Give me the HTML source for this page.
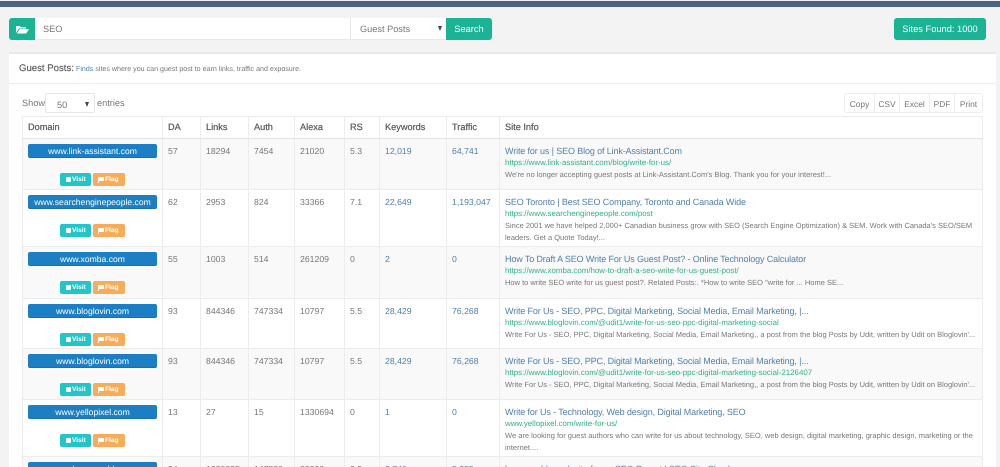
<!DOCTYPE html>
<html lang="en"><head><meta charset="utf-8"><title>Guest Posts</title>
<style>
*{box-sizing:border-box}
html,body{margin:0;padding:0;width:1000px;height:467px;overflow:hidden;background:#f3f3f4;font-family:"Liberation Sans",sans-serif;color:#676a6c;text-rendering:geometricPrecision}
#wrap{position:relative;width:1000px;height:467px;overflow:hidden;background:#f3f3f4}
.abs{position:absolute;white-space:nowrap}
#bar{left:0;top:1px;width:1000px;height:6px;background:#4a6583}
#ic{left:9px;top:18px;width:26px;height:22px;background:#1ab394;border-radius:3px 0 0 3px}
#inp{left:35px;top:18px;width:315px;height:22px;background:#fff;border-bottom:1px solid #e9e9e9;font-size:9.2px;line-height:22px;padding-left:8px;color:#777}
#sel{left:350px;top:18px;width:96px;height:22px;background:#fff;border-left:1px solid #e5e6e7;border-bottom:1px solid #e9e9e9;font-size:9.2px;line-height:22px;padding-left:9px;color:#777}
.arr{position:absolute;width:0;height:0;border-left:2.5px solid transparent;border-right:2.5px solid transparent;border-top:5px solid #444}
#sb{left:446px;top:18px;width:46px;height:22px;background:#1ab394;color:#fff;border-radius:0 3px 3px 0;font-size:9.3px;line-height:22px;text-align:center}
#sf{left:894px;top:18px;width:92px;height:22px;background:#1ab394;color:#fff;border-radius:3px;font-size:9.3px;line-height:22px;text-align:center}
#panel{left:9px;top:52px;width:987px;height:415px;background:#fff;border-top:2px solid #e7e7ec}
#hd{left:9px;top:83px;width:987px;height:1px;background:#eceded}
#gp{left:19px;top:63px;font-size:9.6px;color:#5c5f61;-webkit-text-stroke:.2px #5c5f61}
#gs{left:76px;top:64.5px;font-size:7.1px;color:#777}
#show{left:22px;top:97.5px;font-size:9.2px;color:#777}
#len{left:45px;top:93px;width:50px;height:20px;border:1px solid #e5e6e7;border-radius:2px;background:#fff;font-size:9.2px;line-height:23px;padding-left:11px;color:#777}
#ent{left:97px;top:97.5px;font-size:9.2px;color:#777}
#btns{left:844px;top:93px;height:20px;width:139px;border:1px solid #eceded;border-radius:3px;background:#fff;display:flex;font-size:8.4px;line-height:21px;color:#777}
#btns span{text-align:center;border-left:1px solid #eceded}
#btns span:first-child{border-left:0}
table{position:absolute;left:22px;top:116px;width:961px;border-collapse:collapse;table-layout:fixed;background:#fff}
th,td{border:1px solid #ececec;padding:0 0 0 5px;vertical-align:top;overflow:hidden}
th{height:21px;font-size:9.2px;line-height:21px;text-align:left;color:#5c5f61;font-weight:normal;-webkit-text-stroke:.25px #5c5f61;border-bottom:1px solid #e3e3e3;white-space:nowrap}
td{font-size:8.7px;line-height:12px;padding-top:6px;color:#777}
tr.o td{background:#f9f9f9}
td.b{color:#4f7fae}
td.d{padding:5px 5px 0;text-align:center}
.dom{display:block;width:129px;height:14px;background:#1c7fc4;border-bottom:1px solid #1a6fae;border-radius:2px;color:#fff;font-size:8.6px;line-height:14px;text-align:center;white-space:nowrap}
.acts{display:block;position:relative;height:13px;margin-top:15px;text-align:left}
.v,.f{position:absolute;top:0;height:13px;border-radius:2px;color:#fff;font-size:6.6px;font-weight:bold;line-height:13px;white-space:nowrap}
.v{left:32px;width:31px;background:#23c6c8;padding-left:12px}
.f{left:65px;width:32px;background:#f8ac59;padding-left:12px}
.v i{position:absolute;left:5.5px;top:3.5px;width:5.5px;height:5.5px;background:#fff;border-radius:1px}
.f svg{position:absolute;left:5px;top:3.5px}
.t{display:block;font-size:9px;color:#4f7fae;white-space:nowrap;letter-spacing:-.13px}
.u{display:block;font-size:7.9px;color:#2fb08c;white-space:nowrap}
.x{display:block;font-size:7.5px;color:#777}
.r1{height:51px}.r2{height:57px}.r3{height:52px}.r4{height:50px}.r5{height:51px}.r6{height:57px}
.r7{height:11px}
.r7 td{border-bottom:0}
.c{display:block;height:5px;overflow:hidden}
.r7 td.d .c{height:6px}
</style></head><body>
<div id="wrap">
<div class="abs" id="bar"></div>
<div class="abs" id="ic"><svg width="26" height="22" viewBox="0 0 26 22"><path d="M7 15V8h4l1 1.2h5v1.3h-7L7 15z M8 15.5l2.7-4.5H20l-2.8 4.5z" fill="#fff"/></svg></div>
<div class="abs" id="inp">SEO</div>
<div class="abs" id="sel">Guest Posts<span class="arr" style="left:87px;top:8px"></span></div>
<div class="abs" id="sb">Search</div>
<div class="abs" id="sf">Sites Found: 1000</div>
<div class="abs" id="panel"></div>
<div class="abs" id="hd"></div>
<div class="abs" id="gp">Guest Posts:</div>
<div class="abs" id="gs"><span style="color:#4f7fae">Finds</span> sites where you can guest post to earn links, traffic and exposure.</div>
<div class="abs" id="show">Show</div>
<div class="abs" id="len">50<span class="arr" style="left:39px;top:8px"></span></div>
<div class="abs" id="ent">entries</div>
<div class="abs" id="btns"><span style="width:29px">Copy</span><span style="width:25px">CSV</span><span style="width:30px">Excel</span><span style="width:25px">PDF</span><span style="width:28px">Print</span></div>
<table>
<colgroup><col style="width:140px"><col style="width:38px"><col style="width:48px"><col style="width:46px"><col style="width:50px"><col style="width:35px"><col style="width:67px"><col style="width:53px"><col></colgroup>
<tr><th>Domain</th><th>DA</th><th>Links</th><th>Auth</th><th>Alexa</th><th>RS</th><th>Keywords</th><th>Traffic</th><th>Site Info</th></tr>
<tr class="o r1"><td class="d"><span class="dom">www.link-assistant.com</span><span class="acts"><span class="v"><i></i>Visit</span><span class="f"><svg width="6" height="6"><path d="M0 0h6v4H0zM0 0h1v6H0z" fill="#fff"/></svg>Flag</span></span></td><td>57</td><td>18294</td><td>7454</td><td>21020</td><td>5.3</td><td class="b">12,019</td><td class="b">64,741</td><td><span class="t">Write for us | SEO Blog of Link-Assistant.Com</span><span class="u">https://www.link-assistant.com/blog/write-for-us/</span><span class="x">We're no longer accepting guest posts at Link-Assistant.Com's Blog. Thank you for your interest!...</span></td></tr>
<tr class="r2"><td class="d"><span class="dom">www.searchenginepeople.com</span><span class="acts"><span class="v"><i></i>Visit</span><span class="f"><svg width="6" height="6"><path d="M0 0h6v4H0zM0 0h1v6H0z" fill="#fff"/></svg>Flag</span></span></td><td>62</td><td>2953</td><td>824</td><td>33366</td><td>7.1</td><td class="b">22,649</td><td class="b">1,193,047</td><td><span class="t">SEO Toronto | Best SEO Company, Toronto and Canada Wide</span><span class="u">https://www.searchenginepeople.com/post</span><span class="x">Since 2001 we have helped 2,000+ Canadian business grow with SEO (Search Engine Optimization) &amp; SEM. Work with Canada's SEO/SEM<br>leaders. Get a Quote Today!...</span></td></tr>
<tr class="o r3"><td class="d"><span class="dom">www.xomba.com</span><span class="acts"><span class="v"><i></i>Visit</span><span class="f"><svg width="6" height="6"><path d="M0 0h6v4H0zM0 0h1v6H0z" fill="#fff"/></svg>Flag</span></span></td><td>55</td><td>1003</td><td>514</td><td>261209</td><td>0</td><td class="b">2</td><td class="b">0</td><td><span class="t">How To Draft A SEO Write For Us Guest Post? - Online Technology Calculator</span><span class="u">https://www.xomba.com/how-to-draft-a-seo-write-for-us-guest-post/</span><span class="x">How to write SEO write for us guest post?. Related Posts:. *How to write SEO "write for ... Home SE...</span></td></tr>
<tr class="r4"><td class="d"><span class="dom">www.bloglovin.com</span><span class="acts"><span class="v"><i></i>Visit</span><span class="f"><svg width="6" height="6"><path d="M0 0h6v4H0zM0 0h1v6H0z" fill="#fff"/></svg>Flag</span></span></td><td>93</td><td>844346</td><td>747334</td><td>10797</td><td>5.5</td><td class="b">28,429</td><td class="b">76,268</td><td><span class="t">Write For Us - SEO, PPC, Digital Marketing, Social Media, Email Marketing, |...</span><span class="u">https://www.bloglovin.com/@udit1/write-for-us-seo-ppc-digital-marketing-social</span><span class="x">Write For Us - SEO, PPC, Digital Marketing, Social Media, Email Marketing,, a post from the blog Posts by Udit, written by Udit on Bloglovin'...</span></td></tr>
<tr class="o r5"><td class="d"><span class="dom">www.bloglovin.com</span><span class="acts"><span class="v"><i></i>Visit</span><span class="f"><svg width="6" height="6"><path d="M0 0h6v4H0zM0 0h1v6H0z" fill="#fff"/></svg>Flag</span></span></td><td>93</td><td>844346</td><td>747334</td><td>10797</td><td>5.5</td><td class="b">28,429</td><td class="b">76,268</td><td><span class="t">Write For Us - SEO, PPC, Digital Marketing, Social Media, Email Marketing, |...</span><span class="u">https://www.bloglovin.com/@udit1/write-for-us-seo-ppc-digital-marketing-social-2126407</span><span class="x">Write For Us - SEO, PPC, Digital Marketing, Social Media, Email Marketing,, a post from the blog Posts by Udit, written by Udit on Bloglovin'...</span></td></tr>
<tr class="r6"><td class="d"><span class="dom">www.yellopixel.com</span><span class="acts"><span class="v"><i></i>Visit</span><span class="f"><svg width="6" height="6"><path d="M0 0h6v4H0zM0 0h1v6H0z" fill="#fff"/></svg>Flag</span></span></td><td>13</td><td>27</td><td>15</td><td>1330694</td><td>0</td><td class="b">1</td><td class="b">0</td><td><span class="t">Write for Us - Technology, Web design, Digital Marketing, SEO</span><span class="u">www.yellopixel.com/write-for-us/</span><span class="x">We are looking for guest authors who can write for us about technology, SEO, web design, digital marketing, graphic design, marketing or the<br>internet....</span></td></tr>
<tr class="o r7"><td class="d"><span class="c"><span class="dom">www.hyperworld.com</span></span></td><td><span class="c">54</span></td><td><span class="c">1220825</span></td><td><span class="c">147580</span></td><td><span class="c">39398</span></td><td><span class="c">3.5</span></td><td class="b"><span class="c">2,740</span></td><td class="b"><span class="c">5,955</span></td><td><span class="c"><span class="t">hyperworld.com/write-for-us SEO Report | SEO Site Checkup</span></span></td></tr>
</table>
</div>
</body></html>
